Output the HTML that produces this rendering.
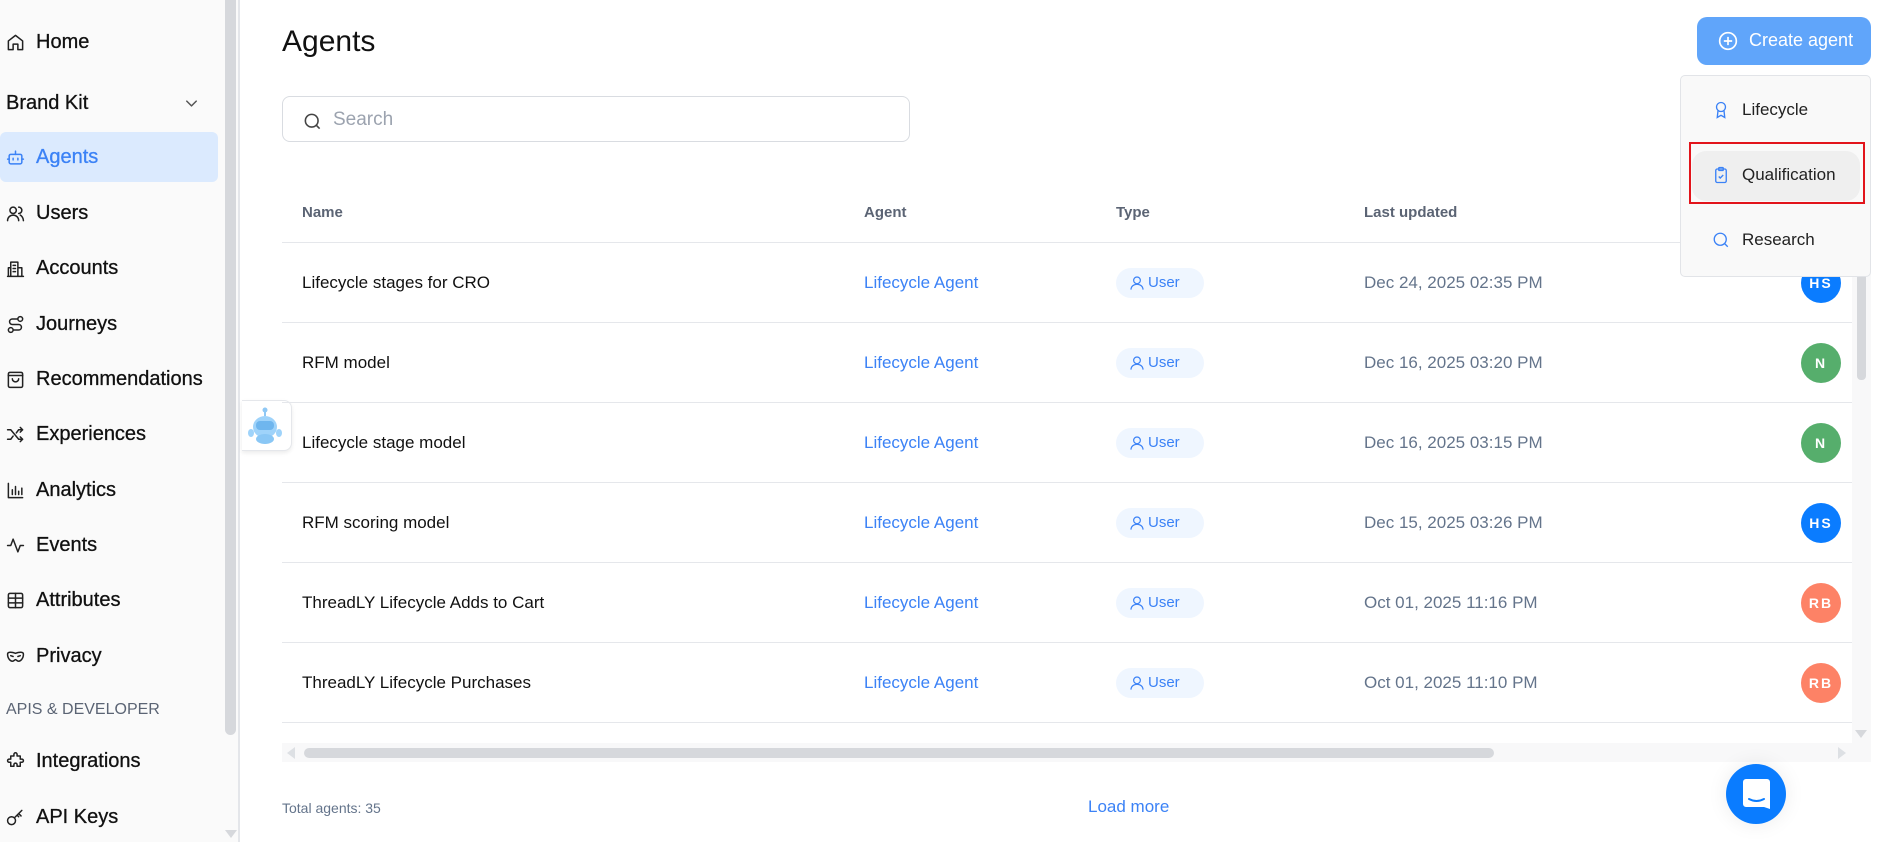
<!DOCTYPE html>
<html><head><meta charset="utf-8"><style>
*{box-sizing:border-box;margin:0;padding:0}
body{width:1887px;height:842px;overflow:hidden;background:#fff;font-family:"Liberation Sans",Arial,sans-serif;position:relative;color:#111}
.abs{position:absolute}
#side{left:0;top:0;width:240px;height:842px;background:#fafafa;border-right:2px solid #e4e6ea}
.nav{position:absolute;left:0;height:40px;display:flex;align-items:center;font-size:20px;color:#111;width:218px}
.nav svg{position:absolute;left:6px;width:19px;height:19px;fill:none;stroke:#222;stroke-width:1.9;stroke-linecap:round;stroke-linejoin:round}
.nav span{position:absolute;left:36px;-webkit-text-stroke:0.3px #111}
.hl{background:#dbeafe;border-radius:6px;color:#3b82f6}
.hl span{-webkit-text-stroke:0.3px #3b82f6}
.hl svg{stroke:#3b82f6}
.row{position:absolute;left:282px;width:1570px;height:80px;border-top:1.5px solid #e5e7eb;font-size:17px}
.row .t{position:absolute;top:0;line-height:80px}
.c1{left:20px;color:#111}.c2{left:582px;color:#3b82f6}.c4{left:1082px;color:#64748b}
.row .badge{position:absolute;left:834px;top:25px;width:88px;height:30px;border-radius:15px;background:#eff6ff;color:#3b82f6;font-size:15px;line-height:30px;padding-left:32px}
.badge svg{position:absolute;left:13px;top:7px;width:16px;height:16px;fill:none;stroke:#3b82f6;stroke-width:1.8}
.row .av{position:absolute;left:1519px;top:20px;width:40px;height:40px;border-radius:50%;color:#fff;font-size:14px;font-weight:bold;line-height:40px;text-align:center;letter-spacing:2px}
.th{position:absolute;top:204px;font-size:15px;font-weight:bold;color:#5b6474}
.dd{position:absolute;left:1712px;font-size:17px;color:#222}
.dd svg{position:absolute;left:0;top:1px;width:18px;height:18px;fill:none;stroke:#3b82f6;stroke-width:1.8}
.dd span{position:absolute;left:30px;white-space:nowrap}
</style></head><body>
<div id="side" class="abs">
 <div class="abs" style="left:225px;top:0;width:11px;height:735px;background:#d6d8dc;border-radius:0 0 6px 6px"></div>
 <div class="abs" style="left:225px;top:830px;width:0;height:0;border-left:6px solid transparent;border-right:6px solid transparent;border-top:8px solid #d6d8dc"></div>
 <div class="nav" style="top:22px"><svg viewBox="0 0 24 24"><path d="M3 10l9-7 9 7v11h-6v-7H9v7H3z"/></svg><span>Home</span></div>
 <div class="nav" style="top:83px"><span style="left:6px">Brand Kit</span><svg viewBox="0 0 24 24" style="left:182px;stroke:#555"><path d="M6 9l6 6 6-6"/></svg></div>
 <div class="nav hl" style="top:132px;height:50px"><svg viewBox="0 0 24 24"><rect x="4" y="8" width="16" height="12" rx="2"/><path d="M12 8V4M9 13v2M15 13v2M2 14h2M20 14h2"/></svg><span>Agents</span></div>
 <div class="nav" style="top:193px"><svg viewBox="0 0 24 24"><circle cx="9" cy="8" r="4"/><path d="M2 21c0-4 3-7 7-7s7 3 7 7M16 4a4 4 0 010 8M22 21c0-3-2-6-4-7"/></svg><span>Users</span></div>
 <div class="nav" style="top:248px"><svg viewBox="0 0 24 24"><path d="M6 22V4h9v18M3 22V11h3M15 11h5v11M2 22h20M9 8h3M9 12h3M9 16h3"/></svg><span>Accounts</span></div>
 <div class="nav" style="top:304px"><svg viewBox="0 0 24 24"><circle cx="18" cy="5" r="3"/><circle cx="6" cy="19" r="3"/><path d="M15 5H8a3.5 3.5 0 000 7h8a3.5 3.5 0 010 7H9"/></svg><span>Journeys</span></div>
 <div class="nav" style="top:359px"><svg viewBox="0 0 24 24"><rect x="3" y="3" width="18" height="19" rx="2"/><path d="M3 7h18M8 11a4 4 0 008 0"/></svg><span>Recommendations</span></div>
 <div class="nav" style="top:414px"><svg viewBox="0 0 24 24"><path d="M2 6h4l10 12h5M2 18h4l3-4M13 10l3-4h5M18 3l3 3-3 3M18 15l3 3-3 3"/></svg><span>Experiences</span></div>
 <div class="nav" style="top:470px"><svg viewBox="0 0 24 24"><path d="M3 3v18h18M8 17v-6M12 17V7M16 17v-4M20 17V9"/></svg><span>Analytics</span></div>
 <div class="nav" style="top:525px"><svg viewBox="0 0 24 24"><path d="M2 12h4l3-8 6 16 3-8h4"/></svg><span>Events</span></div>
 <div class="nav" style="top:580px"><svg viewBox="0 0 24 24"><rect x="3" y="3" width="18" height="18" rx="2"/><path d="M3 9h18M3 15h18M12 3v18"/></svg><span>Attributes</span></div>
 <div class="nav" style="top:636px"><svg viewBox="0 0 24 24"><path d="M2 9c0-3 5-3 10-1 5-2 10-2 10 1 0 6-4 9-6 9-2 0-3-2-4-2s-2 2-4 2c-2 0-6-3-6-9zM6 11l3 1M18 11l-3 1"/></svg><span>Privacy</span></div>
 <div class="abs" style="left:6px;top:701px;font-size:16px;color:#5b6474">APIS &amp; DEVELOPER</div>
 <div class="nav" style="top:741px"><svg viewBox="0 0 24 24"><path d="M10 3a2 2 0 014 0v2h4v4h2a2 2 0 010 4h-2v5h-4v-2a2 2 0 00-4 0v2H6v-5H4a2 2 0 010-4h2V5h4z"/></svg><span>Integrations</span></div>
 <div class="nav" style="top:797px"><svg viewBox="0 0 24 24"><circle cx="7" cy="16" r="5"/><path d="M11 12l9-9M16 7l3 3M14 9l2 2"/></svg><span>API Keys</span></div>
</div>

<div class="abs" style="left:242px;top:400px;width:50px;height:51px;background:#fff;border:1px solid #e5e7eb;border-left:none;border-radius:0 8px 8px 0;box-shadow:0 2px 4px rgba(0,0,0,.08)">
 <svg width="36" height="38" viewBox="0 0 36 38" style="position:absolute;left:5px;top:6px"><circle cx="18" cy="3" r="2.5" fill="#8fc8f5"/><path d="M18 5v4" stroke="#8fc8f5" stroke-width="2"/><ellipse cx="18" cy="20" rx="12" ry="11" fill="#9fd3fa"/><rect x="9" y="14" width="18" height="9" rx="4" fill="#6fb6ee"/><ellipse cx="4" cy="26" rx="3" ry="4" fill="#9fd3fa"/><ellipse cx="32" cy="26" rx="3" ry="4" fill="#9fd3fa"/><ellipse cx="18" cy="32" rx="9" ry="5" fill="#8ac7f5"/></svg>
</div>

<div class="abs" style="left:282px;top:25px;font-size:30px;color:#111">Agents</div>
<div class="abs" style="left:282px;top:96px;width:628px;height:46px;border:1.5px solid #d9dce1;border-radius:8px">
 <svg class="abs" style="left:20px;top:15px" width="19" height="19" viewBox="0 0 24 24" fill="none" stroke="#444" stroke-width="2"><circle cx="11" cy="11" r="8"/><path d="M21 21l-4.3-4.3"/></svg>
 <div class="abs" style="left:50px;top:12px;font-size:19px;color:#9ca3af">Search</div>
</div>

<div class="th" style="left:302px">Name</div>
<div class="th" style="left:864px">Agent</div>
<div class="th" style="left:1116px">Type</div>
<div class="th" style="left:1364px">Last updated</div>

<div class="row" style="top:242px"><div class="t c1">Lifecycle stages for CRO</div><div class="t c2">Lifecycle Agent</div><div class="badge"><svg viewBox="0 0 24 24"><circle cx="12" cy="8" r="5"/><path d="M3 22c0-5 4-8 9-8s9 3 9 8"/></svg>User</div><div class="t c4">Dec 24, 2025 02:35 PM</div><div class="av" style="background:#0a7cff">HS</div></div>
<div class="row" style="top:322px"><div class="t c1">RFM model</div><div class="t c2">Lifecycle Agent</div><div class="badge"><svg viewBox="0 0 24 24"><circle cx="12" cy="8" r="5"/><path d="M3 22c0-5 4-8 9-8s9 3 9 8"/></svg>User</div><div class="t c4">Dec 16, 2025 03:20 PM</div><div class="av" style="background:#56ae6c">N</div></div>
<div class="row" style="top:402px"><div class="t c1">Lifecycle stage model</div><div class="t c2">Lifecycle Agent</div><div class="badge"><svg viewBox="0 0 24 24"><circle cx="12" cy="8" r="5"/><path d="M3 22c0-5 4-8 9-8s9 3 9 8"/></svg>User</div><div class="t c4">Dec 16, 2025 03:15 PM</div><div class="av" style="background:#56ae6c">N</div></div>
<div class="row" style="top:482px"><div class="t c1">RFM scoring model</div><div class="t c2">Lifecycle Agent</div><div class="badge"><svg viewBox="0 0 24 24"><circle cx="12" cy="8" r="5"/><path d="M3 22c0-5 4-8 9-8s9 3 9 8"/></svg>User</div><div class="t c4">Dec 15, 2025 03:26 PM</div><div class="av" style="background:#0a7cff">HS</div></div>
<div class="row" style="top:562px"><div class="t c1">ThreadLY Lifecycle Adds to Cart</div><div class="t c2">Lifecycle Agent</div><div class="badge"><svg viewBox="0 0 24 24"><circle cx="12" cy="8" r="5"/><path d="M3 22c0-5 4-8 9-8s9 3 9 8"/></svg>User</div><div class="t c4">Oct 01, 2025 11:16 PM</div><div class="av" style="background:#fd8266">RB</div></div>
<div class="row" style="top:642px"><div class="t c1">ThreadLY Lifecycle Purchases</div><div class="t c2">Lifecycle Agent</div><div class="badge"><svg viewBox="0 0 24 24"><circle cx="12" cy="8" r="5"/><path d="M3 22c0-5 4-8 9-8s9 3 9 8"/></svg>User</div><div class="t c4">Oct 01, 2025 11:10 PM</div><div class="av" style="background:#fd8266">RB</div></div>
<div class="row" style="top:722px;height:21px;overflow:hidden"></div>

<div class="abs" style="left:1852px;top:242px;width:19px;height:520px;background:#f8f8f9"></div>
<div class="abs" style="left:1857px;top:270px;width:9px;height:110px;background:#d6d8dc;border-radius:4px"></div>
<div class="abs" style="left:1855px;top:730px;border-left:6px solid transparent;border-right:6px solid transparent;border-top:8px solid #d6d8dc"></div>
<div class="abs" style="left:282px;top:743px;width:1589px;height:19px;background:#f8f8f9"></div>
<div class="abs" style="left:304px;top:748px;width:1190px;height:10px;background:#d6d8dc;border-radius:5px"></div>
<div class="abs" style="left:287px;top:747px;border-top:6px solid transparent;border-bottom:6px solid transparent;border-right:8px solid #dde0e4"></div>
<div class="abs" style="left:1838px;top:747px;border-top:6px solid transparent;border-bottom:6px solid transparent;border-left:8px solid #dde0e4"></div>

<div class="abs" style="left:282px;top:800px;font-size:14px;color:#64748b">Total agents: 35</div>
<div class="abs" style="left:1088px;top:797px;font-size:17px;color:#3b82f6">Load more</div>

<div class="abs" style="left:1726px;top:764px;width:60px;height:60px;border-radius:50%;background:#0a7cff;box-shadow:0 0 20px rgba(0,0,0,.08)">
 <svg class="abs" style="left:17px;top:15px" width="27" height="30" viewBox="0 0 27 30"><path d="M3 0h21a3 3 0 013 3v27l-6-2H3a3 3 0 01-3-3V3a3 3 0 013-3z" fill="#fff"/><path d="M6 20q7.5 4 15 0" stroke="#0a7cff" stroke-width="2" fill="none" stroke-linecap="round"/></svg>
</div>

<div class="abs" style="left:1697px;top:17px;width:174px;height:48px;border-radius:10px;background:#60a5fa;color:#fff;font-size:18px">
 <svg class="abs" style="left:21px;top:14px" width="20" height="20" viewBox="0 0 24 24" fill="none" stroke="#fff" stroke-width="2"><circle cx="12" cy="12" r="10"/><path d="M12 7v10M7 12h10"/></svg>
 <div class="abs" style="left:52px;top:13px">Create agent</div>
</div>

<div class="abs" style="left:1680px;top:75px;width:191px;height:202px;background:#f9f9f9;border:1px solid #e2e4e8;border-radius:5px"></div>
<div class="abs" style="left:1692px;top:151px;width:168px;height:50px;background:#efefef;border-radius:14px"></div>
<div class="abs" style="left:1689px;top:142px;width:176px;height:62px;border:2px solid #e2141b"></div>
<div class="dd" style="top:100px"><svg viewBox="0 0 24 24"><circle cx="12" cy="8" r="6"/><path d="M8 13l-1 9 5-3 5 3-1-9"/></svg><span>Lifecycle</span></div>
<div class="dd" style="top:165px"><svg viewBox="0 0 24 24"><rect x="5" y="4" width="14" height="18" rx="2"/><rect x="9" y="2" width="6" height="4" rx="1"/><path d="M9 14l2 2 4-4"/></svg><span>Qualification</span></div>
<div class="dd" style="top:230px"><svg viewBox="0 0 24 24"><circle cx="11" cy="11" r="8"/><path d="M21 21l-4.3-4.3"/></svg><span>Research</span></div>
</body></html>
